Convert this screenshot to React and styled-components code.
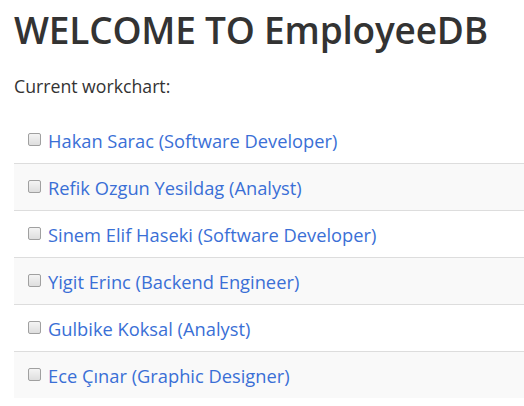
import styled, { createGlobalStyle } from "styled-components";

const employees = [
  { name: "Hakan Sarac", role: "Software Developer" },
  { name: "Refik Ozgun Yesildag", role: "Analyst" },
  { name: "Sinem Elif Haseki", role: "Software Developer" },
  { name: "Yigit Erinc", role: "Backend Engineer" },
  { name: "Gulbike Koksal", role: "Analyst" },
  { name: "Ece Çınar", role: "Graphic Designer" },
];

function App() {
  return (
    <>
      <GlobalStyle />
      <Page>
        <Title>WELCOME TO EmployeeDB</Title>
        <Intro>Current workchart:</Intro>
        <Chart>
          {employees.map((emp, i) => (
            <Row key={emp.name} striped={i % 2 === 1} first={i === 0}>
              <Check type="checkbox" />
              <Name href="#">
                {emp.name} ({emp.role})
              </Name>
            </Row>
          ))}
        </Chart>
      </Page>
    </>
  );
}

// Styled Components
const GlobalStyle = createGlobalStyle`
  body {
    margin: 0;
    background: #fff;
    font-family: "Open Sans", "Noto Sans", sans-serif;
    color: #333;
    overflow: hidden;
  }
`;

const Page = styled.div`
  padding: 0 0 0 14px;
`;

const Title = styled.h1`
  margin: 0;
  padding-top: 6px;
  font-size: 37px;
  font-weight: 600;
  line-height: 48px;
  color: #333;
  letter-spacing: -0.2px;
`;

const Intro = styled.p`
  margin: 20px 0 0;
  font-size: 17.7px;
  line-height: 24px;
`;

const Chart = styled.ul`
  list-style: none;
  margin: 19px 0 0;
  padding: 0;
`;

const Row = styled.li`
  display: flex;
  align-items: center;
  height: 46px;
  padding-left: 14px;
  border-top: ${(props) => (props.first ? "none" : "1px solid #ddd")};
  background-color: ${(props) => (props.striped ? "#f9f9f9" : "#fff")};
`;

const Check = styled.input`
  appearance: none;
  width: 13px;
  height: 13px;
  margin: 0 7px 2px 0;
  border: 1px solid #a0a0a0;
  border-radius: 2px;
  background: linear-gradient(#f4f4f4, #dedede);
`;

const Name = styled.a`
  font-size: 18.3px;
  color: #3a6fd6;
  text-decoration: none;
  letter-spacing: 0;
`;

export default App;
